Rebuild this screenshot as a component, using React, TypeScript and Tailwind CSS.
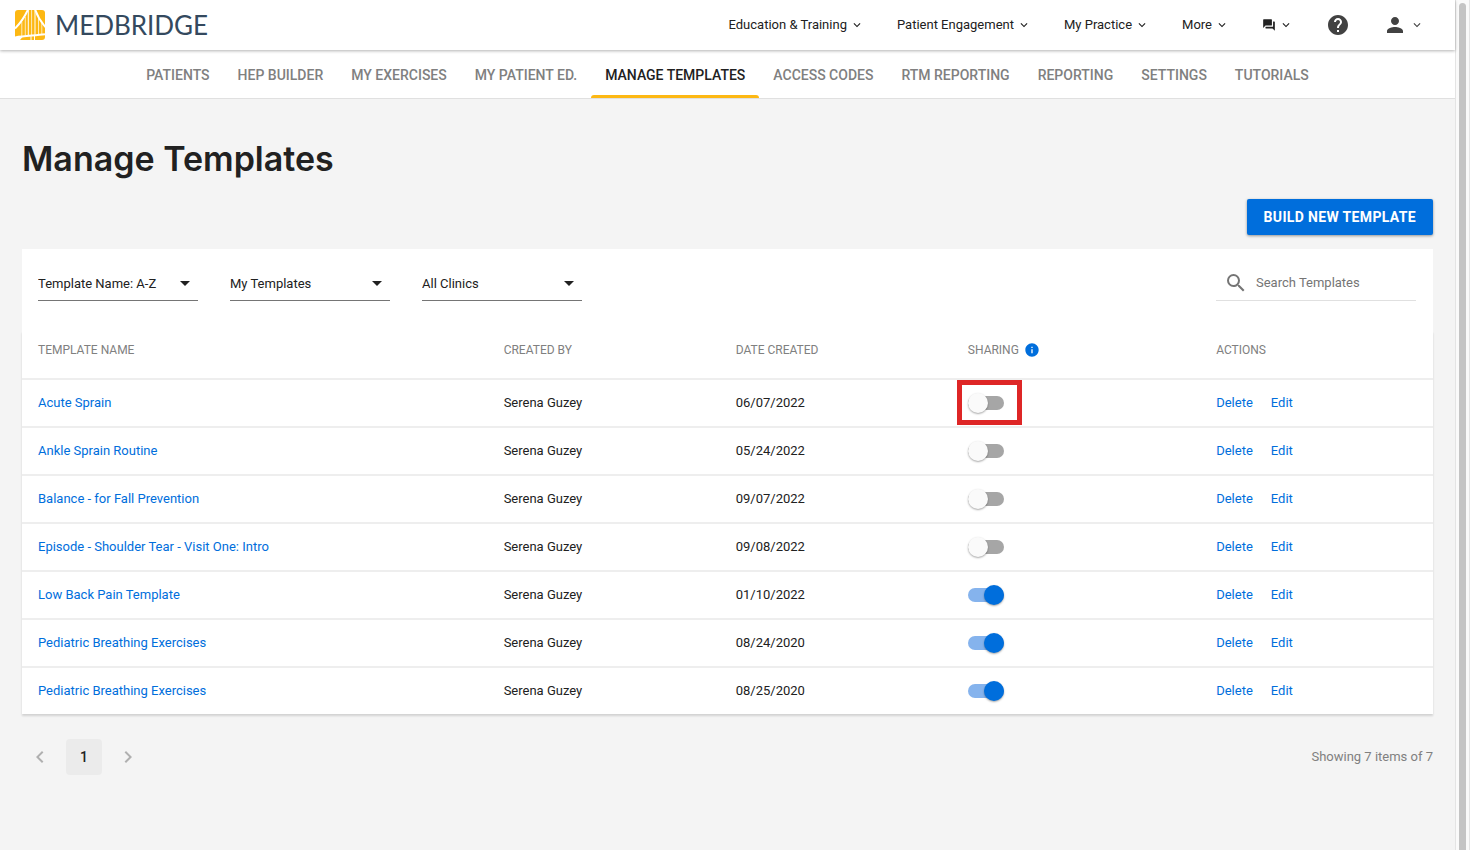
import React, { useState } from 'react';
import {
    MdArrowDropDown,
    MdChevronLeft,
    MdChevronRight,
    MdExpandMore,
    MdForum,
    MdHelp,
    MdInfo,
    MdPerson,
    MdSearch,
} from 'react-icons/md';

interface Template {
    id: number;
    name: string;
    createdBy: string;
    date: string;
    shared: boolean;
}

const MENUS = ['Education & Training', 'Patient Engagement', 'My Practice', 'More'];

const TABS = [
    'PATIENTS',
    'HEP BUILDER',
    'MY EXERCISES',
    'MY PATIENT ED.',
    'MANAGE TEMPLATES',
    'ACCESS CODES',
    'RTM REPORTING',
    'REPORTING',
    'SETTINGS',
    'TUTORIALS',
];

const FILTERS = [
    { label: 'Sort by', options: ['Template Name: A-Z', 'Template Name: Z-A'] },
    { label: 'Owner', options: ['My Templates', 'Shared Templates'] },
    { label: 'Clinic', options: ['All Clinics'] },
];

const TEMPLATES: Template[] = [
    { id: 1, name: 'Acute Sprain', createdBy: 'Serena Guzey', date: '06/07/2022', shared: false },
    { id: 2, name: 'Ankle Sprain Routine', createdBy: 'Serena Guzey', date: '05/24/2022', shared: false },
    { id: 3, name: 'Balance - for Fall Prevention', createdBy: 'Serena Guzey', date: '09/07/2022', shared: false },
    { id: 4, name: 'Episode - Shoulder Tear - Visit One: Intro', createdBy: 'Serena Guzey', date: '09/08/2022', shared: false },
    { id: 5, name: 'Low Back Pain Template', createdBy: 'Serena Guzey', date: '01/10/2022', shared: true },
    { id: 6, name: 'Pediatric Breathing Exercises', createdBy: 'Serena Guzey', date: '08/24/2020', shared: true },
    { id: 7, name: 'Pediatric Breathing Exercises', createdBy: 'Serena Guzey', date: '08/25/2020', shared: true },
];

const HIGHLIGHTED_ID = 1;

const LogoMark: React.FC = () => (
    <svg width="30" height="30" viewBox="0 0 30 30" aria-hidden="true">
        <rect width="30" height="30" rx="3" fill="#fdb813" />
        <g stroke="#fff" fill="none">
            <path d="M12.800 0C9.500 7 5.500 13 0 18.500M20.300 0C22.500 6.500 26 12 30.500 17" strokeWidth="2" />
            <path d="M13.300 0V26M20 0V26" strokeWidth="1" />
            <path d="M6.800 12V26M10.300 7V26M16.600 0V26M23.500 7V25M26.800 13V25" strokeWidth="0.700" />
            <path d="M0 27.400C10 26 20 25.500 30 24.300" strokeWidth="2" />
            <path d="M16 26V30M19.500 26V30" strokeWidth="1" />
        </g>
        <path d="M0 27L8 26.500L5 30H0Z" fill="#fff" />
    </svg>
);

const Header: React.FC = () => (
    <header className="relative z-10 flex h-[50px] items-center justify-between bg-white pl-[15px] pr-[31px] shadow-[0_1px_3px_rgba(0,0,0,0.3)]">
        <a href="#home" className="flex items-center gap-[10px]">
            <LogoMark />
            <span className="font-[Lato] text-[26px] leading-[30px] text-[#34495e]">MEDBRIDGE</span>
        </a>
        <nav className="flex items-center gap-[33px] text-[13px] text-[#212121]">
            {MENUS.map(menu => (
                <button key={menu} type="button" className="flex items-center gap-[3px]">
                    {menu}
                    <MdExpandMore size={14} />
                </button>
            ))}
            <button type="button" aria-label="Messages" className="flex items-center gap-[3px]">
                <MdForum size={14} />
                <MdExpandMore size={14} />
            </button>
            <button type="button" aria-label="Help" className="text-[#424242]">
                <MdHelp size={24} />
            </button>
            <button type="button" aria-label="Account" className="flex items-center gap-[3px] text-[#424242]">
                <MdPerson size={24} />
                <MdExpandMore size={14} />
            </button>
        </nav>
    </header>
);

const Tabs: React.FC = () => (
    <nav className="flex h-[49px] justify-center border-b border-[#e0e0e0] bg-white text-sm font-medium">
        {TABS.map(tab =>
            tab === 'MANAGE TEMPLATES' ? (
                <a key={tab} href="#tab" aria-current="page" className="relative flex items-center px-[14px] pt-0.5 text-[#212121]">
                    {tab}
                    <span className="absolute inset-x-0 bottom-0 h-[3px] rounded-t-[3px] bg-[#fdb813]" />
                </a>
            ) : (
                <a key={tab} href="#tab" className="flex items-center px-[14px] pt-0.5 text-[#808080]">
                    {tab}
                </a>
            )
        )}
    </nav>
);

const Toolbar: React.FC = () => {
    const [search, setSearch] = useState('');

    return (
        <div className="flex justify-between pt-[18px] pr-[17px] pb-[30px] pl-4">
            <div className="flex gap-8">
                {FILTERS.map(filter => (
                    <div key={filter.label} className="relative w-40">
                        <select
                            aria-label={filter.label}
                            className="h-[34px] w-full appearance-none rounded-none border-b border-[#757575] bg-transparent text-[13px] text-[#212121] outline-none"
                        >
                            {filter.options.map(option => (
                                <option key={option}>{option}</option>
                            ))}
                        </select>
                        <MdArrowDropDown size={24} className="pointer-events-none absolute top-1 right-px text-[#212121]" />
                    </div>
                ))}
            </div>
            <label className="flex h-[34px] w-[200px] items-center gap-2 border-b border-[#e0e0e0] pb-0.5 pl-2">
                <MdSearch size={24} className="shrink-0 text-[#757575]" />
                <input
                    type="text"
                    aria-label="Search Templates"
                    placeholder="Search Templates"
                    value={search}
                    onChange={e => setSearch(e.target.value)}
                    className="w-full min-w-0 bg-transparent text-[13px] text-[#212121] outline-none placeholder:text-[#757575]"
                />
            </label>
        </div>
    );
};

interface ToggleProps {
    label: string;
    checked: boolean;
    highlighted: boolean;
    onChange: () => void;
}

const Toggle: React.FC<ToggleProps> = ({ label, checked, highlighted, onChange }) => (
    <span className="relative flex w-9">
        <input
            type="checkbox"
            role="switch"
            aria-label={label}
            checked={checked}
            onChange={onChange}
            className="relative h-[14px] w-9 cursor-pointer appearance-none rounded-full bg-[#a6a6a6] before:absolute before:-top-[3px] before:left-0 before:h-5 before:w-5 before:rounded-full before:bg-[#fafafa] before:shadow-[0_1px_2px_rgba(0,0,0,0.35)] checked:bg-[#85b3ed] checked:before:left-4 checked:before:bg-[#006edc]"
        />
        {highlighted && (
            <span className="pointer-events-none absolute -top-4 -left-[11px] h-[45px] w-[65px] border-5 border-[#de2626]" />
        )}
    </span>
);

const TemplateTable: React.FC = () => {
    const [templates, setTemplates] = useState(TEMPLATES);

    const toggleShared = (id: number) => {
        setTemplates(templates.map(t => (t.id === id ? { ...t, shared: !t.shared } : t)));
    };

    const removeTemplate = (id: number) => {
        setTemplates(templates.filter(t => t.id !== id));
    };

    return (
        <table className="w-full table-fixed border-separate border-spacing-0 text-left text-[13px] text-[#212121] shadow-[0_2px_2px_rgba(0,0,0,0.14)]">
            <thead>
                <tr className="h-[47px] text-xs text-[#808080] *:px-4 *:pb-[10px] *:font-normal">
                    <th className="w-[33%]">TEMPLATE NAME</th>
                    <th className="w-[16.45%]">CREATED BY</th>
                    <th className="w-[16.45%]">DATE CREATED</th>
                    <th className="w-[17.6%]">
                        <span className="flex items-center gap-[5px]">
                            SHARING
                            <MdInfo size={16} className="text-[#006edc]" />
                        </span>
                    </th>
                    <th>ACTIONS</th>
                </tr>
            </thead>
            <tbody>
                {templates.map(t => (
                    <tr key={t.id} className="h-12 *:border-t-2 *:border-[#eeeeee] *:px-4">
                        <td>
                            <a href="#template" className="text-[#006edc]">{t.name}</a>
                        </td>
                        <td>{t.createdBy}</td>
                        <td>{t.date}</td>
                        <td>
                            <Toggle
                                label={`Share ${t.name}`}
                                checked={t.shared}
                                highlighted={t.id === HIGHLIGHTED_ID}
                                onChange={() => toggleShared(t.id)}
                            />
                        </td>
                        <td>
                            <span className="flex gap-[18px] text-[#006edc]">
                                <button type="button" onClick={() => removeTemplate(t.id)}>Delete</button>
                                <a href="#edit">Edit</a>
                            </span>
                        </td>
                    </tr>
                ))}
            </tbody>
        </table>
    );
};

const Pagination: React.FC = () => (
    <div className="mt-[25px] flex items-center justify-between">
        <div className="flex gap-2 text-[#b0b0b0]">
            <button type="button" aria-label="Previous page" className="flex h-9 w-9 items-center justify-center">
                <MdChevronLeft size={24} />
            </button>
            <button type="button" className="h-9 w-9 rounded bg-[#ebebeb] text-sm font-medium text-[#212121]">1</button>
            <button type="button" aria-label="Next page" className="flex h-9 w-9 items-center justify-center">
                <MdChevronRight size={24} />
            </button>
        </div>
        <p className="text-[13px] text-[#808080]">Showing 7 items of 7</p>
    </div>
);

const App: React.FC = () => {
    return (
        <div className="flex min-h-screen bg-[#f4f4f4] font-[Roboto,sans-serif]">
            <div className="min-w-0 flex-1">
                <Header />
                <Tabs />
                <main className="px-[22px] pt-9">
                    <h1 className="font-[Inter] text-[34px] leading-12 font-semibold text-[#212121]">Manage Templates</h1>
                    <div className="mt-4 flex justify-end">
                        <button
                            type="button"
                            className="h-9 rounded-xs bg-[#006edc] px-[17px] text-sm font-bold tracking-wide text-white shadow-[0_1px_3px_rgba(0,0,0,0.4)]"
                        >
                            BUILD NEW TEMPLATE
                        </button>
                    </div>
                    <section className="mt-[14px] bg-white">
                        <Toolbar />
                        <TemplateTable />
                    </section>
                    <Pagination />
                </main>
            </div>
            {/* scroll track */}
            <div className="w-[15px] border-x border-[#e4e4e4] bg-[#fafafa] px-[3px] pt-[3px]">
                <div className="h-full rounded-t-full bg-[#c4c4c4]" />
            </div>
        </div>
    );
};

export default App;
